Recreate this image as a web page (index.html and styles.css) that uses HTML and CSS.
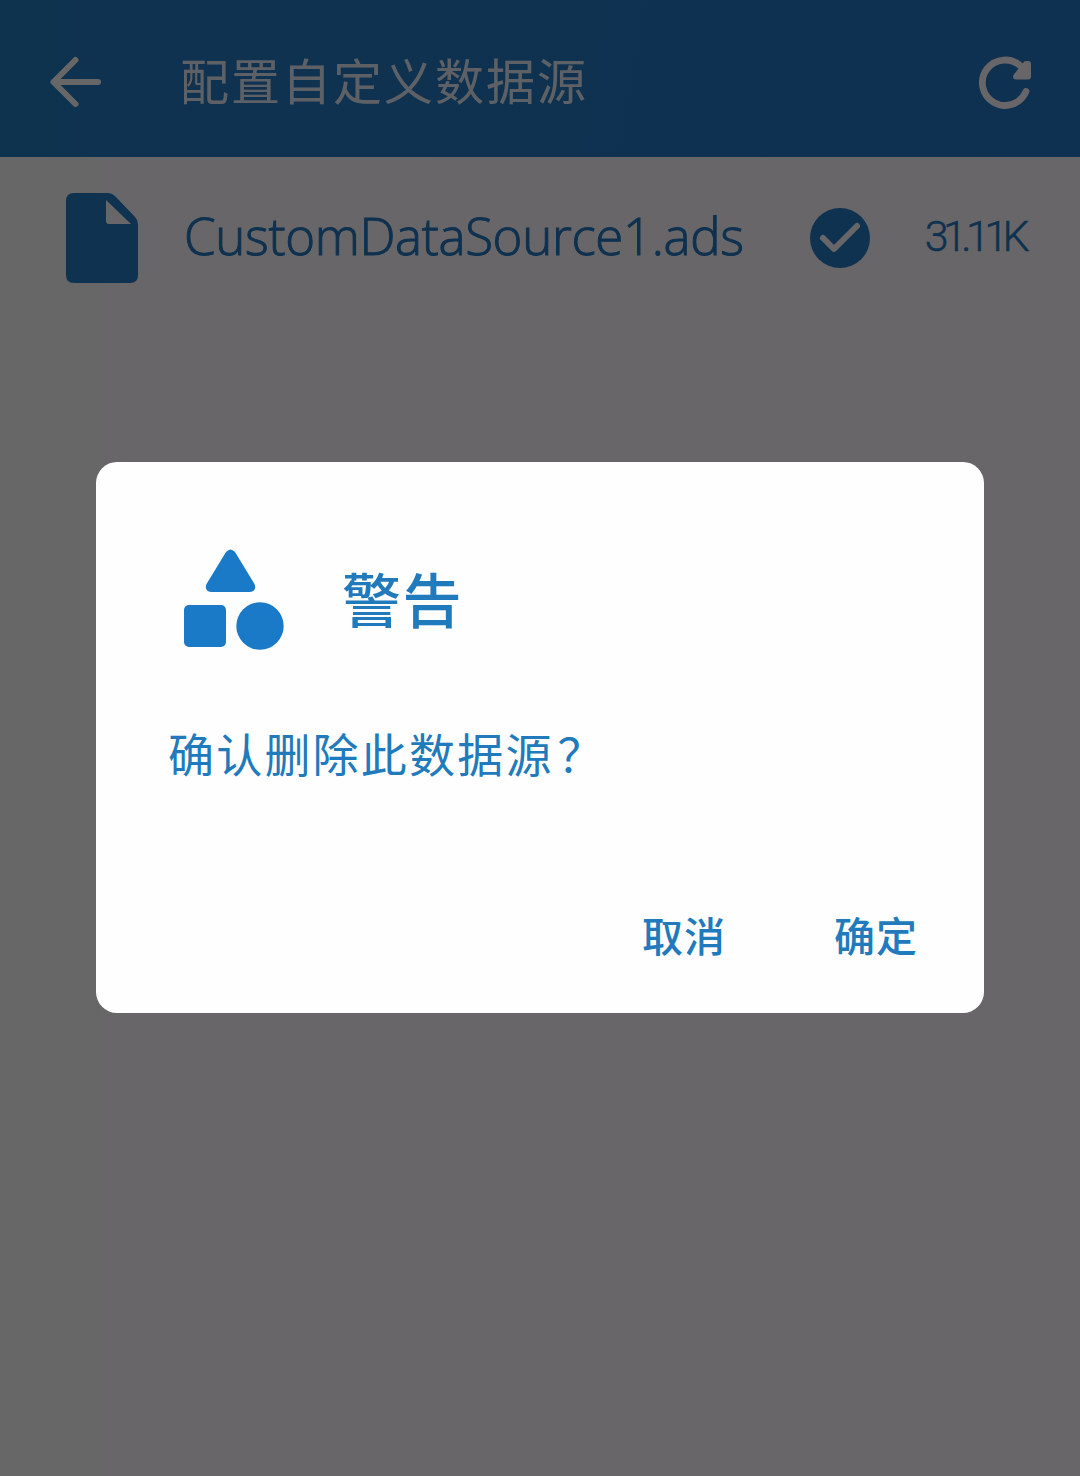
FILE: index.html
```html
<!DOCTYPE html>
<html lang="zh-CN">
<head>
<meta charset="utf-8">
<title>配置自定义数据源</title>
<link rel="stylesheet" href="styles.css">
</head>
<body>
<div class="page">
  <header class="app-bar">
    <svg class="back" width="56" height="56" viewBox="0 0 56 56"><path d="M50 28H7M27.500 6L5.500 28l22 22"/></svg>
    <h1 class="title">配置自定义数据源</h1>
    <svg class="refresh" width="60" height="60" viewBox="0 0 60 60"><path class="ring" d="M50 39.500A22.700 22.700 0 1 1 45 14.500"/><path class="head" d="M52 12V24.500H40L50 12Z"/></svg>
  </header>
  <main class="file-row">
    <svg class="file" width="72" height="90" viewBox="0 0 72 90"><path fill-rule="evenodd" d="M8 0H42Q46 0 49 3L69 24Q72 27 72 31V82Q72 90 64 90H8Q0 90 0 82V8Q0 0 8 0ZM40 7V28Q40 31 43 31H65Z"/></svg>
    <span class="name">CustomDataSource1.ads</span>
    <svg class="check" width="60" height="60" viewBox="0 0 60 60"><circle cx="30" cy="30" r="30"/><path d="M13 30L24 41L47 18"/></svg>
    <span class="size">31.11K</span>
  </main>
</div>
<div class="overlay">
  <section class="dialog" role="dialog">
    <div class="dialog-head">
      <svg width="101" height="101" viewBox="0 0 101 101"><path d="M43 3Q47.500-2 52 3L71.500 35Q74 42 67 43H28Q21 42 23.500 35Z"/><rect x="1" y="56" width="42" height="42" rx="5"/><circle cx="77" cy="77" r="23.700"/></svg>
      <h2>警告</h2>
    </div>
    <p class="message">确认删除此数据源<span class="mark">？</span></p>
    <div class="actions">
      <button>取消</button>
      <button>确定</button>
    </div>
  </section>
</div>
</body>
</html>
```
FILE: styles.css
```css
* { box-sizing: border-box; }

body {
  margin: 0;
  font-family: "Noto Sans CJK SC", sans-serif;
  color: #207abc;
}

h1, h2, p { margin: 0; font-weight: 400; }

.page { height: 1476px; background: #fff; }

.app-bar {
  display: flex;
  align-items: center;
  height: 157px;
  padding: 6px 44px 0 48px;
  background: linear-gradient(100deg, #207dc3, #207ac6);
}

.back { fill: none; stroke: #fff; stroke-width: 6; stroke-linecap: round; stroke-linejoin: round; }

.title {
  flex: 1;
  margin-left: 76px;
  padding-bottom: 6px;
  font-size: 49px;
  line-height: 60px;
  letter-spacing: 2px;
  font-weight: 400;
  color: rgba(255, 255, 255, .88);
}

.refresh { margin-top: 1px; }
.ring { fill: none; stroke: #fff; stroke-width: 6.8; stroke-linecap: round; }
.head { fill: #fff; stroke: #fff; stroke-width: 6; stroke-linejoin: round; }

.file-row {
  display: flex;
  align-items: center;
  padding: 36px 51px 0 66px;
}

.file { fill: #207dc3; }

.name {
  width: 626px;
  margin-left: 46px;
  padding-bottom: 7px;
  font: 300 51px/64px "Open Sans", "Noto Sans", sans-serif;
  letter-spacing: -.35px;
  -webkit-text-stroke: 1px #207ac0;
  color: #207ac0;
}

.check circle { fill: #207dc3; }
.check path { fill: none; stroke: #fff; stroke-width: 6; stroke-linecap: round; stroke-linejoin: round; }

.size {
  margin-left: auto;
  margin-right: -5px;
  padding-bottom: 5px;
  font: 300 43px/60px Roboto, sans-serif;
  letter-spacing: -5.6px;
  -webkit-text-stroke: .5px #207ac0;
  color: #207ac0;
}

.size { margin-right: 5px; }

.overlay {
  position: absolute;
  inset: 0;
  height: 1476px;
  display: flex;
  align-items: flex-start;
  justify-content: center;
  padding-top: 462px;
  background: linear-gradient(90deg, rgba(0, 2, 0, .6), rgba(3, 0, 3, .6) 12%);
}

.dialog {
  width: 888px;
  height: 551px;
  border-radius: 21px;
  background: #fefefe;
}

.dialog-head {
  display: flex;
  align-items: center;
  gap: 58px;
  padding: 87px 0 0 87px;
}

.dialog-head svg { fill: #1a7ac7; }

h2 {
  padding-bottom: 4px;
  font-size: 59px;
  line-height: 80px;
  letter-spacing: 1.5px;
  font-weight: 500;
}

.message {
  padding: 68px 0 0 72px;
  font-size: 46px;
  line-height: 68px;
  letter-spacing: 2.2px;
}

.mark { margin-left: 4px; }

.actions {
  display: flex;
  justify-content: flex-end;
  gap: 108px;
  padding: 118px 66px 0 0;
}

button {
  padding: 0;
  border: 0;
  background: none;
  font: 500 41px/60px "Noto Sans CJK SC", sans-serif;
  letter-spacing: 1px;
  color: #207abc;
}
```
